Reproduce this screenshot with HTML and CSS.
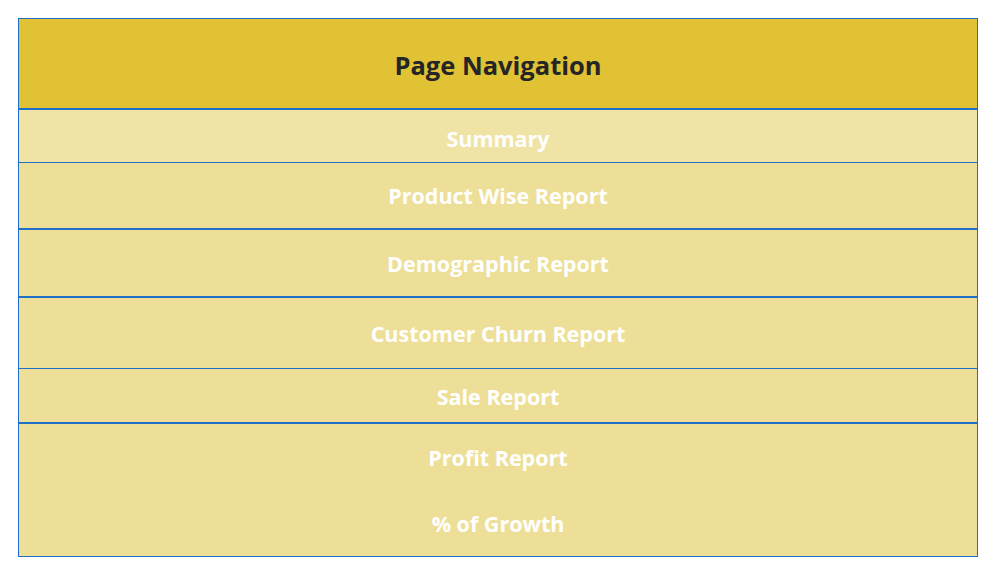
FILE: index.html
```html
<!DOCTYPE html>
<html>
<head>
<meta charset="utf-8">
<link rel="stylesheet" href="styles.css">
</head>
<body>
<div class="nav">
  <div class="head">Page Navigation</div>
  <div class="row r-summary b1">Summary</div>
  <div class="row r-product b2">Product Wise Report</div>
  <div class="row r-demo b2">Demographic Report</div>
  <div class="row r-churn b1">Customer Churn Report</div>
  <div class="row r-sale b2">Sale Report</div>
  <div class="row r-profit">Profit Report</div>
  <div class="row r-growth">% of Growth</div>
</div>
</body>
</html>
```
FILE: styles.css
```css
html, body {
  margin: 0;
  padding: 0;
  background: #ffffff;
}
body {
  padding: 18px 0 0 18px;
  font-family: "Open Sans", "Segoe UI", "DejaVu Sans", sans-serif;
}
.nav {
  width: 958px;
  border: 1px solid #1F6FC8;
  display: flex;
  flex-direction: column;
  background: #EEDF98;
}
.head {
  background: #E0C234;
  border-bottom: 2px solid #1F6FC8;
  display: flex;
  align-items: center;
  justify-content: center;
  font-weight: 700;
  font-size: 25.5px;
  color: #252525;
  padding-top: 2px;
  box-sizing: border-box;
  height: 91px;
}
.row {
  display: flex;
  align-items: center;
  justify-content: center;
  color: #ffffff;
  font-weight: 700;
  font-size: 21.5px;
  box-sizing: border-box;
}
.b1 { border-bottom: 1px solid #1F6FC8; }
.b2 { border-bottom: 2px solid #1F6FC8; }
.r-summary { height: 53px; background: #F0E3A6; padding-top: 5px; }
.r-product { height: 67px; }
.r-demo { height: 68px; }
.r-churn { height: 71px; }
.r-sale { height: 55px; padding-top: 2px; }
.r-profit { height: 66px; }
.r-growth { height: 66px; }
```
